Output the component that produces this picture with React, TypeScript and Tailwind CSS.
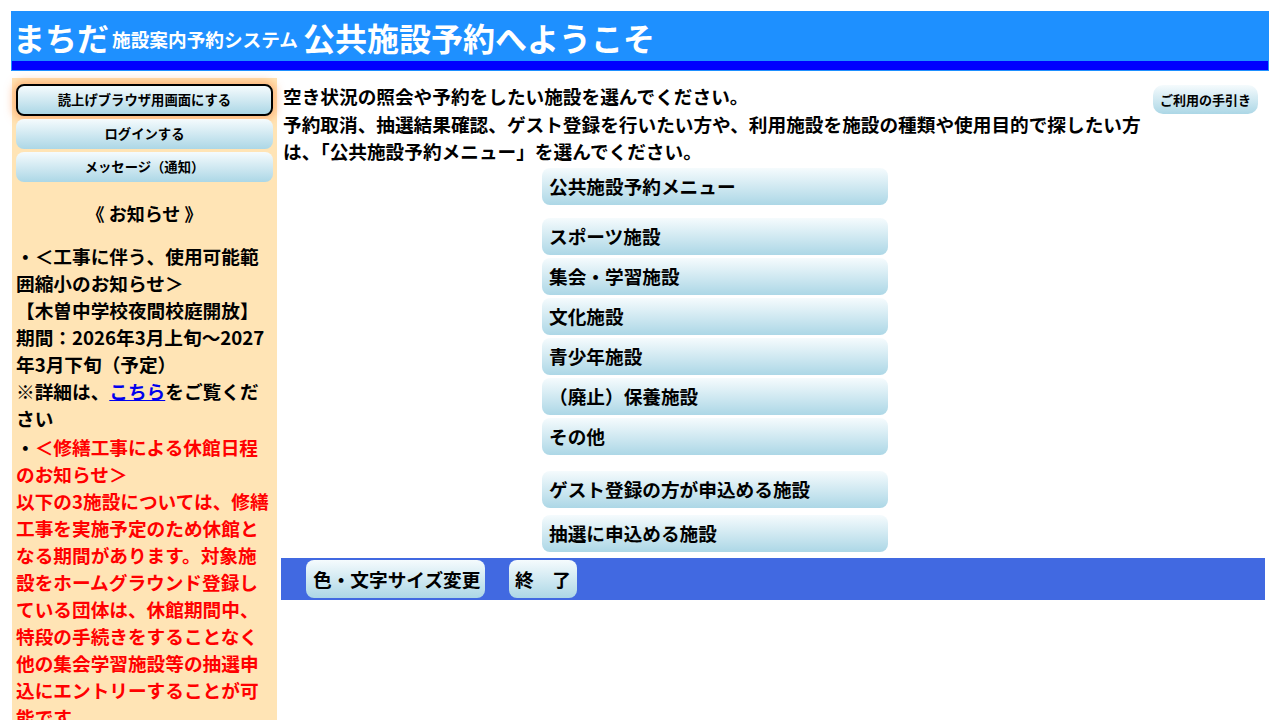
import React from "react";

const btnGrad = "bg-gradient-to-b from-[#f5fbfd] to-[#acd7e6]";
const font = { fontFamily: '"Noto Sans CJK JP", "Noto Sans", sans-serif' };

function FacilityBtn({ label, className = "" }: { label: string; className?: string }) {
  return (
    <div
      className={`w-[346px] h-[37px] rounded-[8px] ${btnGrad} flex items-center pl-[7px] text-[18.67px] font-bold text-black ${className}`}
    >
      {label}
    </div>
  );
}

export default function App() {
  return (
    <div className="bg-white min-h-[720px] pt-[11px] pl-[11px] pr-[11px]" style={font}>
      {/* Header */}
      <div className="w-[1258px] bg-[#1e90ff] p-px">
        <div className="h-[49px] flex items-center pl-[1px] text-white font-bold whitespace-nowrap">
          <span className="text-[32px] leading-none">まちだ</span>
          <span className="text-[18.67px] leading-none ml-[3px] mt-[6px]">施設案内予約システム</span>
          <span className="text-[32px] leading-none ml-[5px]">公共施設予約へようこそ</span>
        </div>
        <div className="h-[9px] bg-[#0000ff]" />
      </div>

      <div className="flex mt-[7px] pl-[1px]">
        {/* Sidebar */}
        <div className="w-[265px] shrink-0 bg-[#ffe4b5] pl-[4px] pr-[4px] pt-[6px] pb-[20px] font-bold text-black">
          <div
            className={`h-[32px] rounded-[8px] border-2 border-black ${btnGrad} flex items-center justify-center text-[13.33px] shadow-[0_0_8px_3px_rgba(255,140,70,0.55)]`}
          >
            読上げブラウザ用画面にする
          </div>
          <div className={`mt-[3px] h-[30px] rounded-[8px] ${btnGrad} flex items-center justify-center text-[13.33px]`}>
            ログインする
          </div>
          <div className={`mt-[3px] h-[30px] rounded-[8px] ${btnGrad} flex items-center justify-center text-[13.33px]`}>
            メッセージ（通知）
          </div>
          <div className="mt-[18px] text-center text-[18px] leading-[27px]">《 お知らせ 》</div>
          <div className="mt-[15px] text-[18.67px] leading-[27px] whitespace-nowrap">
            <div>
              ・＜工事に伴う、使用可能範
              <br />
              囲縮小のお知らせ＞
              <br />
              【木曽中学校夜間校庭開放】
              <br />
              期間：2026年3月上旬～2027
              <br />
              年3月下旬（予定）
              <br />
              ※詳細は、
              <a href="#" className="text-[#0000ee] underline">
                こちら
              </a>
              をご覧くだ
              <br />
              さい
            </div>
            <div className="mt-[2px]">
              ・
              <span className="text-[#ff0000]">
                ＜修繕工事による休館日程
                <br />
                のお知らせ＞
                <br />
                以下の3施設については、修繕
                <br />
                工事を実施予定のため休館と
                <br />
                なる期間があります。対象施
                <br />
                設をホームグラウンド登録し
                <br />
                ている団体は、休館期間中、
                <br />
                特段の手続きをすることなく
                <br />
                他の集会学習施設等の抽選申
                <br />
                込にエントリーすることが可
                <br />
                能です。
              </span>
            </div>
          </div>
        </div>

        {/* Main */}
        <div className="ml-[4px] w-[984px] shrink-0">
          <div className="pl-[2px] pt-[4px]">
            <div
              className={`float-right mr-[7px] mt-[3px] w-[105px] h-[29px] rounded-[10px] ${btnGrad} flex items-center justify-center text-[13px] font-bold text-black`}
            >
              ご利用の手引き
            </div>
            <div className="text-[18.67px] leading-[27.5px] font-bold text-black whitespace-nowrap">
              空き状況の照会や予約をしたい施設を選んでください。
              <br />
              予約取消、抽選結果確認、ゲスト登録を行いたい方や、利用施設を施設の種類や使用目的で探したい方
              <br />
              は、「公共施設予約メニュー」を選んでください。
            </div>
          </div>

          <div className="ml-[261px] mt-[3px] flex flex-col">
            <FacilityBtn label="公共施設予約メニュー" />
            <div className="mt-[13px] flex flex-col gap-[3px]">
              <FacilityBtn label="スポーツ施設" />
              <FacilityBtn label="集会・学習施設" />
              <FacilityBtn label="文化施設" />
              <FacilityBtn label="青少年施設" />
              <FacilityBtn label="（廃止）保養施設" />
              <FacilityBtn label="その他" />
            </div>
            <FacilityBtn label="ゲスト登録の方が申込める施設" className="mt-[16px]" />
            <FacilityBtn label="抽選に申込める施設" className="mt-[7px]" />
          </div>

          <div className="mt-[6px] h-[42px] bg-[#4169e1] flex items-center pl-[25px] gap-[24px]">
            <div
              className={`h-[38px] w-[179px] rounded-[8px] ${btnGrad} flex items-center pl-[7px] text-[18.67px] font-bold text-black`}
            >
              色・文字サイズ変更
            </div>
            <div
              className={`h-[38px] w-[68px] rounded-[8px] ${btnGrad} flex items-center pl-[6px] text-[18.67px] font-bold text-black whitespace-pre`}
            >
              終　了
            </div>
          </div>
        </div>
      </div>
    </div>
  );
}
